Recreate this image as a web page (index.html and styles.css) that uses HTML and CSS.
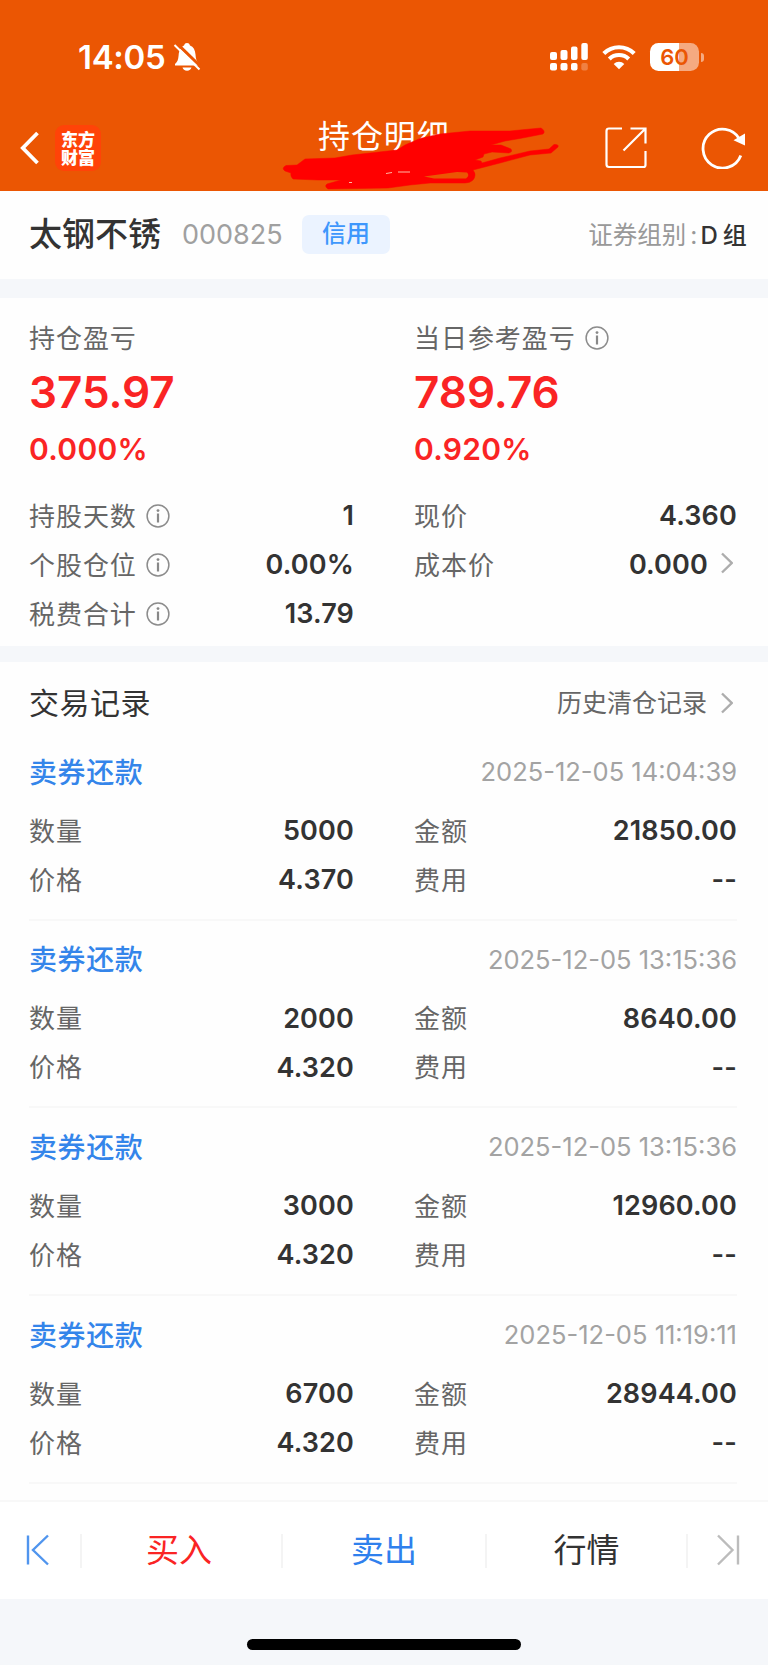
FILE: index.html
```html
<!DOCTYPE html>
<html lang="zh-CN">
<head>
<meta charset="utf-8">
<title>持仓明细</title>
<link rel="stylesheet" href="styles.css">
</head>
<body>
<svg class="defs" width="0" height="0">
  <symbol id="info" viewBox="0 0 24 24"><circle cx="12" cy="12" r="10.9" fill="none" stroke="#8c8c8c" stroke-width="1.5"/><circle cx="12" cy="6.600" r="1.400" fill="#888"/><path d="M12 9.500v9" stroke="#888" stroke-width="2.200"/></symbol>
  <symbol id="chev" viewBox="0 0 12 22"><path d="M1 1.500 10.700 11 1 20.500" fill="none" stroke="#adadad" stroke-width="2.400"/></symbol>
</svg>
<header class="top">
  <div class="status">
    <span class="time">14:05</span>
    <svg class="bell" width="28" height="30" viewBox="0 0 28 30">
      <path d="M2 23.500V22c2.600-2.300 3.200-4.500 3.600-8.500C6 8 8.500 4.500 11 3.500 11.500 1.800 12.500 1 14 1s2.600.8 3 2.500c3.500 1.400 5.200 4.500 5.500 9 .3 4.500 1 7 3.500 9.500v1.500z" fill="#fff"/>
      <path d="M9.500 25.500h9c-.5 2-2.200 3.200-4.500 3.200s-4-1.200-4.500-3.200z" fill="#fff"/>
      <path d="M3.500 1.200 28.500 25.200" stroke="#eb5603" stroke-width="3"/>
      <path d="M1.500 3 26.500 27.500" stroke="#fff" stroke-width="2"/>
    </svg>
    <svg class="signal" width="38" height="28" viewBox="0 0 38 28">
      <g fill="#fff"><rect y="9" width="7" height="8" rx="2"/><rect x="10.500" y="7" width="7" height="10" rx="2"/><rect x="21" y="3.500" width="6.500" height="13.500" rx="2"/><rect x="31.300" width="6.500" height="17" rx="2"/><rect y="20" width="7" height="7.500" rx="2"/><rect x="10.500" y="20" width="7" height="7.500" rx="2"/><rect x="21" y="20" width="6.500" height="7.500" rx="2"/><rect x="31.300" y="20" width="6.500" height="7.500" rx="2" opacity=".25"/></g>
    </svg>
    <svg class="wifi" width="34" height="26" viewBox="0 0 34 26">
      <g fill="none" stroke="#fff" stroke-width="4.200"><path d="M1.800 9.400a21.800 21.800 0 0 1 30.400 0"/><path d="M7.300 14.900a14 14 0 0 1 19.400 0"/></g>
      <path d="M17 25.300 11.700 20a7.500 7.500 0 0 1 10.600 0z" fill="#fff"/>
    </svg>
    <div class="battery"><span>60</span></div>
    <i class="nub"></i>
  </div>
  <div class="nav">
    <svg class="back" width="20" height="34" viewBox="0 0 20 34"><path d="M17.500 2 2.800 17l14.700 15" fill="none" stroke="#fff" stroke-width="3.800"/></svg>
    <div class="logo"><span>东方</span><span>财富</span></div>
    <h1>持仓明细</h1>
    <svg class="share" width="42" height="42" viewBox="0 0 42 42"><path d="M17 1.500H4Q1.500 1.500 1.500 4V37.500Q1.500 40 4 40H38.500Q40.500 40 40.500 38V24M25.500 1.500H40.500V16.500M40.500 1.500 18.500 23.500" fill="none" stroke="#fff" stroke-width="2.200"/></svg>
    <svg class="reload" width="45" height="42" viewBox="0 0 45 42"><path d="M39.800 28.500A19.500 19.500 0 1 1 38.500 12" fill="none" stroke="#fff" stroke-width="2.800"/><path d="M44 6.500v12L32.500 13.300z" fill="#fff"/></svg>
  </div>
  <svg class="scribble" width="280" height="66" viewBox="280 125 280 66">
    <path d="M286 165.500 297 165 305 159 335 158 352 155 397 150 405 145 420 138.500 440 134 470 131 510 131 525 129.500 541 128Q546 131 543 134L520 138.500 505 141 491 145 501 145 511 149Q513 152 509 153L492 152 484 154 483 157 475 160 481 161 482 163 500 158 530 151 549 149 554 144.500Q559 144 558 147L551 153 530 155 500 163 473 170Q477 175 473 180 470 183 465 183H430L410 185 388 188 328 189Q324 186 327 184L341 180 318 180 293 179Q290 176 291 173L285 171Q281 168 286 165.500z" fill="red" stroke="red" stroke-width=".5"/>
    <path d="m424 176.500 33-4.500 10 .5q3 3-1 6h-32z" fill="#eb5603"/>
    <path d="M386 173.500 392 172.500M398 172h12M349 182.500h3" stroke="#ffb9a5" stroke-width="1"/>
  </svg>
</header>
<main>
  <section class="stock">
    <h2>太钢不锈</h2><span class="code">000825</span><span class="tag">信用</span>
    <span class="group">证券组别<i>:</i><b>D 组</b></span>
  </section>
  <section class="summary">
    <div class="pnl">
      <div><div class="label">持仓盈亏</div><div class="big">375.97</div><div class="pct">0.000%</div></div>
      <div><div class="label">当日参考盈亏<svg class="info"><use href="#info"/></svg></div><div class="big">789.76</div><div class="pct">0.920%</div></div>
    </div>
    <div class="row"><div class="cell">持股天数<svg class="info"><use href="#info"/></svg><b>1</b></div><div class="cell">现价<b>4.360</b></div></div>
    <div class="row"><div class="cell">个股仓位<svg class="info"><use href="#info"/></svg><b>0.00%</b></div><div class="cell">成本价<b>0.000</b><svg class="chev"><use href="#chev"/></svg></div></div>
    <div class="row"><div class="cell">税费合计<svg class="info"><use href="#info"/></svg><b>13.79</b></div></div>
  </section>
  <section class="records">
    <div class="records-head"><h3>交易记录</h3><span>历史清仓记录</span><svg class="chev"><use href="#chev"/></svg></div>
    <article><div class="rec-title"><h4>卖券还款</h4><time>2025-12-05 14:04:39</time></div>
      <div class="row"><div class="cell">数量<b>5000</b></div><div class="cell">金额<b>21850.00</b></div></div>
      <div class="row"><div class="cell">价格<b>4.370</b></div><div class="cell">费用<b>--</b></div></div></article>
    <article><div class="rec-title"><h4>卖券还款</h4><time>2025-12-05 13:15:36</time></div>
      <div class="row"><div class="cell">数量<b>2000</b></div><div class="cell">金额<b>8640.00</b></div></div>
      <div class="row"><div class="cell">价格<b>4.320</b></div><div class="cell">费用<b>--</b></div></div></article>
    <article><div class="rec-title"><h4>卖券还款</h4><time>2025-12-05 13:15:36</time></div>
      <div class="row"><div class="cell">数量<b>3000</b></div><div class="cell">金额<b>12960.00</b></div></div>
      <div class="row"><div class="cell">价格<b>4.320</b></div><div class="cell">费用<b>--</b></div></div></article>
    <article><div class="rec-title"><h4>卖券还款</h4><time>2025-12-05 11:19:11</time></div>
      <div class="row"><div class="cell">数量<b>6700</b></div><div class="cell">金额<b>28944.00</b></div></div>
      <div class="row"><div class="cell">价格<b>4.320</b></div><div class="cell">费用<b>--</b></div></div></article>
  </section>
</main>
<nav class="actions">
  <a class="first"><svg width="24" height="32" viewBox="0 0 24 32"><path d="M2 1.500v29M22 1.500 7 16l15 14.500" fill="none" stroke="#5095ee" stroke-width="2.400"/></svg></a>
  <a class="buy">买入</a>
  <a class="sell">卖出</a>
  <a class="quote">行情</a>
  <a class="last"><svg width="24" height="32" viewBox="0 0 24 32"><path d="M22 1.500v29M2 1.500 16.500 16 2 30.500" fill="none" stroke="#bcbcbc" stroke-width="2.400"/></svg></a>
</nav>
<footer class="home"><i></i></footer>
</body>
</html>
```
FILE: styles.css
```css
* { box-sizing: border-box; }
body { margin: 0; width: 768px; height: 1665px; overflow: hidden; background: #fefefe; color: #333; font-family: Inter, "Noto Sans CJK SC", sans-serif; display: flex; flex-direction: column; }
h1, h2, h3, h4 { margin: 0; font-weight: 400; }
i { font-style: normal; }
svg { display: block; flex: none; }
.defs { position: absolute; }

.top { position: relative; height: 191px; flex: none; background: #eb5603; color: #fff; }
.status { height: 114px; padding-left: 78px; display: flex; align-items: center; }
.time { width: 94px; font-size: 33px; font-weight: 600; line-height: 40px; letter-spacing: -.3px; white-space: nowrap; }
.bell { margin-left: 1px; }
.signal { margin-left: 349px; }
.wifi { margin-left: 14px; }
.battery { width: 49px; height: 28px; margin-left: 14px; border-radius: 8.500px; background: linear-gradient(90deg, #fff 60%, #f5aa81 60%); color: #eb5603; font-size: 22px; font-weight: 600; line-height: 28px; text-align: center; }
.nub { width: 2.500px; height: 9px; margin-left: 2px; border-radius: 0 3px 3px 0; background: #f5aa81; }
.nav { height: 68px; padding-left: 20px; display: flex; align-items: center; }
.logo { width: 46px; height: 46px; margin-left: 15px; border-radius: 9px; background: #ff4308; font: 900 17px/18px "Noto Sans CJK SC", sans-serif; display: flex; flex-direction: column; align-items: center; justify-content: center; }
h1 { width: 286px; margin: -22px 0 0 217px; font-size: 32px; line-height: 44px; letter-spacing: .9px; font-weight: 400; }
.share { margin-left: 1px; }
.reload { margin-left: 54px; }
.scribble { position: absolute; left: 280px; top: 125px; }

.stock { height: 88px; padding: 0 22px 2px 29px; display: flex; align-items: center; }
.stock h2 { width: 153px; padding-bottom: 4px; font-size: 33px; font-weight: 500; white-space: nowrap; }
.code { width: 120px; font-size: 27px; color: #a0a0a0; }
.tag { width: 88px; height: 39px; border-radius: 7px; background: #ebf3ff; color: #3e97fc; font-size: 24px; font-weight: 500; line-height: 38px; text-align: center; }
.group { margin-left: auto; padding-bottom: 2px; font-size: 24.500px; color: #999; white-space: nowrap; font-weight: 400; }
.group i { margin: 0 3px 0 4px; }
.group b { color: #333; font-weight: 500; font-size: 24px; letter-spacing: -.7px; }

.summary { height: 383px; border: solid #f5f7fa; border-width: 19px 0 16px; padding: 21px 31px 0 29px; }
.pnl, .row { display: grid; grid-template-columns: 325px 323px; column-gap: 60px; }
.pnl { height: 173px; }
.label, .cell { display: flex; align-items: center; font-size: 26px; letter-spacing: .95px; color: #666; white-space: nowrap; font-weight: 400; padding-bottom: 5px; }
.label { height: 39px; }
.info { width: 24px; height: 24px; margin: 3px 0 0 9px; }
.big { height: 68px; font-size: 44px; line-height: 68px; font-weight: 600; color: #fa2424; }
.pct { height: 46px; font-size: 30px; line-height: 46px; font-weight: 600; letter-spacing: .3px; color: #fa2424; }
.row, .cell { height: 49px; }
.cell b { margin-left: auto; padding-top: 3px; font-size: 27px; font-weight: 600; letter-spacing: .15px; color: #333; }
.chev { width: 12px; height: 22px; margin: 0 4px 0 13px; }

.records { padding: 0 31px 0 29px; }
.records-head { height: 71px; padding-top: 7px; display: flex; align-items: center; }
.records-head h3 { margin-right: auto; font-size: 30px; letter-spacing: .5px; }
.records-head span { font-size: 25px; color: #666; }
.records-head .chev { margin: 3px 4px 0 14px; }
article { height: 187.700px; border-bottom: 2px solid #f8f8f8; padding-top: 11px; }
.rec-title { height: 55px; margin-bottom: 8px; display: flex; justify-content: space-between; align-items: center; }
.rec-title h4 { padding-bottom: 2px; color: #3485ea; font-size: 28px; letter-spacing: .6px; font-weight: 500; }
time { font-size: 25.500px; color: #a3a3a3; }

.actions { position: absolute; top: 1500px; left: 0; width: 768px; height: 99px; border-top: 2px solid #f8f8f8; background: #fff; display: grid; grid-template-columns: 82px 201px 204px 201px 80px; align-items: center; font-size: 33px; }
.actions a { height: 34px; line-height: 34px; padding-bottom: 1px; display: flex; align-items: center; justify-content: center; border-right: 2px solid #f4f4f4; }
.actions .first { padding-right: 5px; }
.actions .last { border: 0; }
.actions .buy { color: #fa2424; padding-right: 5px; }
.sell { color: #2f80ed; }
.home { position: absolute; top: 1599px; width: 768px; height: 66px; background: #f5f7fa; display: flex; justify-content: center; padding-top: 40px; }
.home i { width: 274px; height: 11px; border-radius: 6px; background: #000; }
```
